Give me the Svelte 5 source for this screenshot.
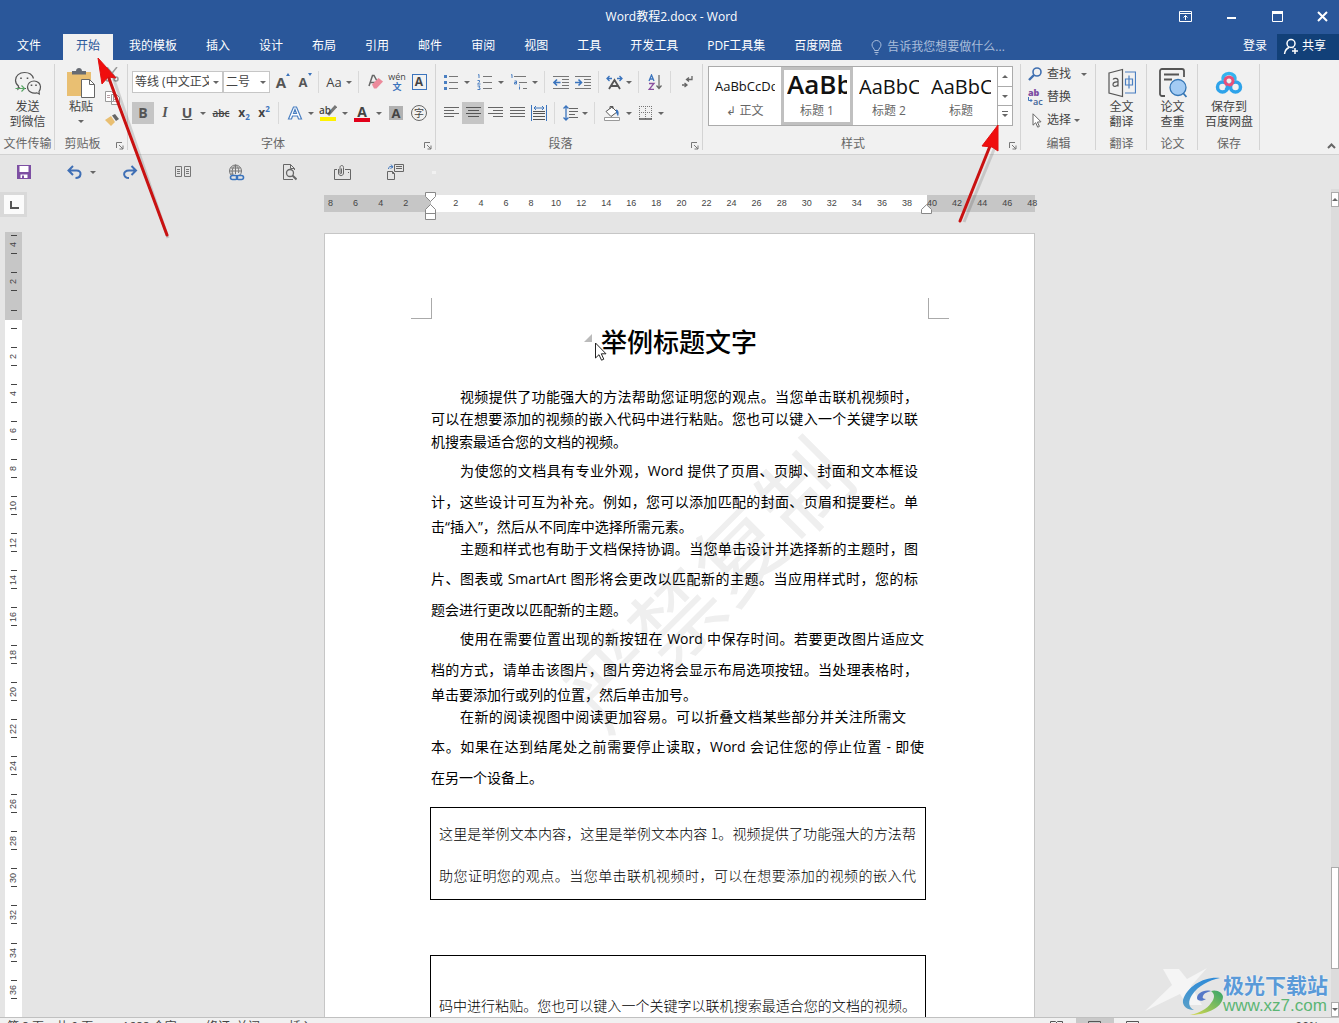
<script lang="ts">
    const tabs = [
        "我的模板", "插入", "设计", "布局", "引用", "邮件", "审阅", "视图",
        "工具", "开发工具", "PDF工具集", "百度网盘",
    ];

    const styles = [
        { sample: "AaBbCcDd", name: "↲ 正文", kind: "small" },
        { sample: "AaBb", name: "标题 1", kind: "strong" },
        { sample: "AaBbC", name: "标题 2", kind: "big" },
        { sample: "AaBbC", name: "标题", kind: "big" },
    ];

    // row: line height step, end: last line of a paragraph, start: indented first line
    const lines = [
        { text: "视频提供了功能强大的方法帮助您证明您的观点。当您单击联机视频时，", row: "r22", start: true },
        { text: "可以在想要添加的视频的嵌入代码中进行粘贴。您也可以键入一个关键字以联", row: "r22" },
        { text: "机搜索最适合您的文档的视频。", row: "r24", end: true },
        { text: "为使您的文档具有专业外观，Word 提供了页眉、页脚、封面和文本框设", row: "r34", start: true },
        { text: "计，这些设计可互为补充。例如，您可以添加匹配的封面、页眉和提要栏。单", row: "r28" },
        { text: "击“插入”，然后从不同库中选择所需元素。", row: "r22", end: true },
        { text: "主题和样式也有助于文档保持协调。当您单击设计并选择新的主题时，图", row: "r22", start: true },
        { text: "片、图表或 SmartArt 图形将会更改以匹配新的主题。当应用样式时，您的标", row: "r38" },
        { text: "题会进行更改以匹配新的主题。", row: "r24", end: true },
        { text: "使用在需要位置出现的新按钮在 Word 中保存时间。若要更改图片适应文", row: "r34", start: true, full: true },
        { text: "档的方式，请单击该图片，图片旁边将会显示布局选项按钮。当处理表格时，", row: "r28" },
        { text: "单击要添加行或列的位置，然后单击加号。", row: "r22", end: true },
        { text: "在新的阅读视图中阅读更加容易。可以折叠文档某些部分并关注所需文", row: "r22", start: true, short: true },
        { text: "本。如果在达到结尾处之前需要停止读取，Word 会记住您的停止位置 - 即使", row: "r38", full: true },
        { text: "在另一个设备上。", row: "r24", end: true },
    ];

    const hMarks = [8, 6, 4, 2, ...Array.from({ length: 25 }, (_, i) => i * 2)];
    const vMarks = [4, 2, ...Array.from({ length: 19 }, (_, i) => i * 2)];

    let activeStyle = $state(1);
    let font = $state("等线 (中文正文)");
    let size = $state("二号");
</script>

{#snippet caret()}
    <button class="caret" aria-label="更多选项"></button>
{/snippet}

{#snippet sep()}
    <span class="sep"></span>
{/snippet}

{#snippet launcher()}
    <button class="launcher" aria-label="对话框启动器">
        <svg width="8" height="8" viewBox="0 0 8 8"><path d="M.5 6V.5H6M3 3l4 4M7 3.5V7H3.5" /></svg>
    </button>
{/snippet}

<div class="app">
    <header>
        <div class="titlebar">
            <h1>Word教程2.docx - Word</h1>
            <div class="window-buttons">
                <button aria-label="功能区显示选项">
                    <svg width="13" height="11" viewBox="0 0 13 11"><path d="M.5.5h12v10H.5zM.5 2.5h12M6.5 9V4.500M4.500 6.500l2-2 2 2" /></svg>
                </button>
                <button aria-label="最小化">
                    <svg width="11" height="11" viewBox="0 0 11 11"><path d="M1 7h9" stroke-width="2" /></svg>
                </button>
                <button aria-label="最大化">
                    <svg width="11" height="11" viewBox="0 0 11 11"><path d="M.5 1h10v9.500H.5z" /><path d="M0 1.500h11" stroke-width="3" /></svg>
                </button>
                <button aria-label="关闭">
                    <svg width="11" height="11" viewBox="0 0 11 11"><path d="M1 1l9 9M10 1l-9 9" stroke-width="2" /></svg>
                </button>
            </div>
        </div>
        <nav>
            <button class="tab file">文件</button>
            <button class="tab active">开始</button>
            {#each tabs as tab}
                <button class="tab">{tab}</button>
            {/each}
            <button class="tell">
                <svg width="11" height="15" viewBox="0 0 11 15"><path d="M3.500 10.500C3.500 8.500 1 7.500 1 5a4.500 4.500 0 0 1 9 0c0 2.500-2.500 3.500-2.500 5.500zM3.500 12.500h4M4.500 14.300h2" /></svg>
                告诉我您想要做什么...
            </button>
            <button class="login">登录</button>
            <button class="share">
                <svg width="16" height="17" viewBox="0 0 16 17"><circle cx="8" cy="5.500" r="4" /><path d="M1.500 16c.5-3.500 2-5.500 4.500-6.500M9.500 9.500l1 .7M12 10v6M9 13h6" /></svg>
                共享
            </button>
        </nav>
    </header>

    <div class="ribbon">
        <section class="group wechat">
            <button class="large">
                <svg width="28" height="26" viewBox="0 0 28 26" fill="none" stroke="#555" stroke-width="1.200">
                    <path d="M6 17.500l-2 1.500.5-3C2.500 14.500 1.500 12.500 1.500 10.300 1.500 5.500 5.500 2.500 10.500 2.500c4.500 0 8 2.500 9 6M9 18.500h3" />
                    <path d="M25 21.500l.3 2.500-2.500-1.200c-4.500 1.200-9.300-1.500-9.300-5.800 0-3.700 3-6 6.600-6 3.700 0 6.400 2.600 6.400 5.700 0 2-.6 3.600-1.500 4.800z" />
                    <path d="M1.500 18.500h9M7.500 15.500l3 3-3 3" stroke="#58a565" />
                    <path d="M7 7.500v1.600M13.500 7.500v1.600M17.500 14.500V16M22 14.500V16" stroke-width="1.600" />
                </svg>
                <span>发送<br />到微信</span>
            </button>
            <footer>文件传输</footer>
        </section>

        <section class="group clipboard">
            <div class="paste-row">
                <button class="large">
                    <svg width="28" height="30" viewBox="0 0 28 30">
                        <path d="M0 4h24v24H0z" fill="#e9bf72" />
                        <path d="M5 6.500V3h4c0-4 6-4 6 0h4v3.500z" fill="#666b73" />
                        <path d="M14.500 11.500h8l5 5v13h-13z" fill="#fff" stroke="#666" />
                        <path d="M22.500 11.500v5h5" fill="none" stroke="#666" />
                    </svg>
                    <span>粘贴</span>
                    <i class="tri"></i>
                </button>
                <div class="clip-tools">
                    <button aria-label="剪切">
                        <svg width="14" height="15" viewBox="0 0 14 15" fill="none" stroke="#999" stroke-width="1.500"><path d="M2 0l8 10M12 0L4 10" /><circle cx="3" cy="12" r="2" /><circle cx="11" cy="12" r="2" /></svg>
                    </button>
                    <button aria-label="复制">
                        <svg width="15" height="14" viewBox="0 0 15 14" fill="#fff" stroke="#999"><path d="M.5.5h6l2 2v8h-8zM6.500 3.500h5l3 3v7h-8z" /><path d="M8.500 8.500h4M8.500 10.500h4M2 4.500h3M2 6.500h3" stroke="#b9a0a5" /></svg>
                    </button>
                    <button aria-label="格式刷">
                        <svg width="15" height="12" viewBox="0 0 15 12"><path d="M0 6l6-4 4 6-4 4z" fill="#e9bf72" /><path d="M7 1.500L10 0l4 5-3 2z" fill="#666" /></svg>
                    </button>
                </div>
            </div>
            <footer>剪贴板</footer>
            {@render launcher()}
        </section>

        <section class="group font">
            <div class="row">
                <label class="combo wide">
                    <select bind:value={font} aria-label="字体">
                        <option>等线 (中文正文)</option>
                    </select>
                </label>
                <label class="combo">
                    <select bind:value={size} aria-label="字号">
                        <option>二号</option>
                    </select>
                </label>
                <button class="tool glyph grow">A<i class="mark up"></i></button>
                <button class="tool glyph shrink">A<i class="mark down"></i></button>
                {@render sep()}
                <button class="tool w20 aa">Aa</button>
                {@render caret()}
                {@render sep()}
                <button class="tool" aria-label="清除格式">
                    <svg width="15" height="16" viewBox="0 0 15 16"><path d="M1 12L4.500 1.500h1.500L9 7M2 8.500h5" fill="none" stroke="#666" stroke-width="1.500" /><path d="M4 10.500L10.500 4 15 7.500 8.500 14.500H6z" fill="#ec8a9b" /></svg>
                </button>
                <button class="tool pinyin"><span>wén</span><b>文</b></button>
                <button class="tool"><span class="boxed">A</span></button>
            </div>
            <div class="row">
                <button class="tool glyph pressed">B</button>
                <button class="tool glyph italic">I</button>
                <button class="tool glyph under">U</button>
                {@render caret()}
                <button class="tool strike">abc</button>
                <button class="tool w20 script">x<sub>2</sub></button>
                <button class="tool w20 script">x<sup>2</sup></button>
                {@render sep()}
                <button class="tool effect" aria-label="文本效果">
                    <svg width="16" height="16" viewBox="0 0 16 16"><path d="M1.500 14L6.500 2h3l5 12h-3l-1-3h-5l-1 3zM6.500 8.500h3L8 4.500z" fill="#fff" stroke="#4a7fc1" stroke-width="1.200" /></svg>
                </button>
                {@render caret()}
                <button class="tool w24 highlight"><span>ab</span>
                    <svg width="17" height="16" viewBox="0 0 17 16"><path d="M8 10l8-9" stroke="#777" stroke-width="3" /><path d="M0 12h16v4H0z" fill="#fff200" /></svg>
                </button>
                {@render caret()}
                <button class="tool w24"><span class="red-a">A</span></button>
                {@render caret()}
                <button class="tool w24"><span class="shade-a">A</span></button>
                <button class="tool"><span class="circled">字</span></button>
            </div>
            <footer>字体</footer>
            {@render launcher()}
        </section>

        <section class="group paragraph">
            <div class="row">
                <button class="tool" aria-label="项目符号">
                    <svg width="14" height="16" viewBox="0 0 14 16"><path d="M5 2.500h9M5 8.500h9M5 14.500h9" stroke="#777" /><path d="M0 1h3v3H0zM0 7h3v3H0zM0 13h3v3H0z" fill="#4a7fc1" /></svg>
                </button>
                {@render caret()}
                <button class="tool w24" aria-label="编号">
                    <svg width="15" height="16" viewBox="0 0 15 16" fill="none"><path d="M6 2.500h9M6 8.500h9M6 14.500h9" stroke="#777" /><path d="M1 1l1-.5V4M.5 6.500h2v1.700L.5 10h3M.5 12h2.500L2 13.500l1 .5v1.500H.5" stroke="#4a7fc1" /></svg>
                </button>
                {@render caret()}
                <button class="tool w24" aria-label="多级列表">
                    <svg width="17" height="16" viewBox="0 0 17 16" fill="none"><path d="M4 2.500h12M9 8.500h8M13 14.500h4" stroke="#777" /><path d="M1 1l1-.5V4M4.500 7h2v3h-2V8.500h2M9.500 12.500v3M9.500 10.500v1" stroke="#4a7fc1" /></svg>
                </button>
                {@render caret()}
                {@render sep()}
                <button class="tool" aria-label="减少缩进量">
                    <svg width="16" height="13" viewBox="0 0 16 13" fill="none"><path d="M0 .5h16M9 3.500h7M9 6.500h7M9 9.500h7M0 12.500h16" stroke="#777" /><path d="M7.500 6.500h-6M4 3.500l-3 3 3 3" stroke="#3b74bd" stroke-width="1.600" /></svg>
                </button>
                <button class="tool" aria-label="增加缩进量">
                    <svg width="16" height="13" viewBox="0 0 16 13" fill="none"><path d="M0 .5h16M9 3.500h7M9 6.500h7M9 9.500h7M0 12.500h16" stroke="#777" /><path d="M0 6.500h6M3.500 3.500l3 3-3 3" stroke="#3b74bd" stroke-width="1.600" /></svg>
                </button>
                {@render sep()}
                <button class="tool w20" aria-label="中文版式">
                    <svg width="17" height="15" viewBox="0 0 17 15" fill="none"><path d="M3 14L8.500 5 14 14M5 11h7" stroke="#555" stroke-width="1.800" /><path d="M1 3.500h5M3.500 1L1 3.500 3.500 6M16 3.500h-5M13.500 1L16 3.500 13.500 6" stroke="#3b74bd" stroke-width="1.300" /></svg>
                </button>
                {@render caret()}
                {@render sep()}
                <button class="tool" aria-label="排序">
                    <svg width="15" height="16" viewBox="0 0 15 16" fill="none"><path d="M1 7l2.500-6L6 7M2 5h3" stroke="#3b74bd" stroke-width="1.300" /><path d="M1 9.500h5l-5 6h5" stroke="#8b4f9f" stroke-width="1.300" /><path d="M11 1v13M8.500 11.500L11 14.500l2.500-3" stroke="#666" stroke-width="1.200" /></svg>
                </button>
                {@render sep()}
                <button class="tool" aria-label="显示编辑标记">
                    <svg width="12" height="12" viewBox="0 0 12 12" fill="none" stroke="#666" stroke-width="1.300"><path d="M11 0v3.500H6M8 1.500L5.500 3.500 8 5.500M1 9h5M3.500 7L6 9l-2.500 2" /></svg>
                </button>
            </div>
            <div class="row">
                <button class="tool" aria-label="左对齐">
                    <svg width="15" height="12" viewBox="0 0 15 12"><path d="M0 .5h15M0 3.500h10M0 6.500h15M0 9.500h10" stroke="#666" /></svg>
                </button>
                <button class="tool pressed" aria-label="居中">
                    <svg width="15" height="12" viewBox="0 0 15 12"><path d="M0 .5h15M2 3.500h11M0 6.500h15M2 9.500h11" stroke="#555" /></svg>
                </button>
                <button class="tool" aria-label="右对齐">
                    <svg width="15" height="12" viewBox="0 0 15 12"><path d="M0 .5h15M5 3.500h10M0 6.500h15M5 9.500h10" stroke="#666" /></svg>
                </button>
                <button class="tool" aria-label="两端对齐">
                    <svg width="15" height="12" viewBox="0 0 15 12"><path d="M0 .5h15M0 3.500h15M0 6.500h15M0 9.500h15" stroke="#666" /></svg>
                </button>
                <button class="tool" aria-label="分散对齐">
                    <svg width="16" height="16" viewBox="0 0 16 16" fill="none"><path d="M2 6.500h12M2 8.500h12M2 11.500h12M2 14.500h12" stroke="#555" /><path d="M.5 0v16M15.500 0v16M3 3h10M5 1L3 3l2 2M11 1l2 2-2 2" stroke="#3b74bd" /></svg>
                </button>
                {@render sep()}
                <button class="tool w20" aria-label="行距">
                    <svg width="15" height="16" viewBox="0 0 15 16" fill="none"><path d="M6 3.500h9M6 6.500h9M6 9.500h6M6 12.500h9" stroke="#666" /><path d="M3 1v14M.5 3.500L3 1l2.500 2.500M.5 12.500L3 15l2.500-2.500" stroke="#3b74bd" stroke-width="1.300" /></svg>
                </button>
                {@render caret()}
                {@render sep()}
                <button class="tool w24" aria-label="底纹">
                    <svg width="18" height="16" viewBox="0 0 18 16"><path d="M3 6.500L9 2l5 5-6 4.500zM7 4V1.500h3V4" fill="#fff" stroke="#555" /><path d="M13 4.500c3 0 3 4 2 7l-2-4z" fill="#3b74bd" /><path d="M1.500 12.500h15v3h-15z" fill="#fff" stroke="#999" /></svg>
                </button>
                {@render caret()}
                <button class="tool" aria-label="边框">
                    <svg width="13" height="14" viewBox="0 0 13 14" fill="none"><path d="M.5 0v13M6.500 0v13M12.500 0v13M0 .5h13M0 6.500h13" stroke="#777" stroke-dasharray="1 1" /><path d="M0 13h13" stroke="#555" stroke-width="1.500" /></svg>
                </button>
                {@render caret()}
            </div>
            <footer>段落</footer>
            {@render launcher()}
        </section>

        <section class="group styles">
            <div class="gallery">
                {#each styles as style, i}
                    <button class="style {style.kind}" class:chosen={activeStyle === i} onclick={() => (activeStyle = i)}>
                        <span class="sample">{style.sample}</span>
                        <span>{style.name}</span>
                    </button>
                {/each}
                <div class="gallery-scroll">
                    <button aria-label="上一行"><i class="tri flip"></i></button>
                    <button aria-label="下一行"><i class="tri"></i></button>
                    <button aria-label="其他"><i class="tri lined"></i></button>
                </div>
            </div>
            <footer>样式</footer>
            {@render launcher()}
        </section>

        <section class="group edit">
            <button class="line">
                <svg width="16" height="14" viewBox="0 0 16 14" fill="none" stroke="#3f6fb0"><circle cx="9" cy="5" r="4" stroke-width="1.600" /><path d="M6 8l-5 5" stroke-width="2.400" /></svg>
                查找<i class="tri far"></i>
            </button>
            <button class="line">
                <span class="abac">
                    <b>ab</b>
                    <em><svg width="5" height="6" viewBox="0 0 5 6"><path d="M.5 0v3.500H4M2.500 2L4 3.500 2.500 5" fill="none" stroke="#3b74bd" /></svg>ac</em>
                </span>
                替换
            </button>
            <button class="line">
                <svg width="16" height="15" viewBox="0 0 16 15"><path d="M5 .8v11.400l2.700-2.500 2 4.500 1.700-.8-2-4.300 3.600-.3z" fill="#fff" stroke="#666" /></svg>
                选择<i class="tri"></i>
            </button>
            <footer>编辑</footer>
        </section>

        <section class="group narrow">
            <button class="large">
                <svg width="28" height="29" viewBox="0 0 28 29" fill="none" stroke="#555" stroke-width="1.200">
                    <path d="M1 4.500L14.500 1v27L1 24.500z" />
                    <path d="M5 11c1-1.500 5-2 5 1v6M10 13.500c-3-.3-5 .5-5 2.500 0 3 4 2 5 0" />
                    <path d="M17 3.500h10.500v21H17M17.500 10.500h7v6h-7zM21 7v13" stroke="#4a7fc1" />
                </svg>
                <span>全文<br />翻译</span>
            </button>
            <footer>翻译</footer>
        </section>

        <section class="group narrow">
            <button class="large">
                <svg width="28" height="30" viewBox="0 0 28 30" fill="none" stroke="#555" stroke-width="1.800">
                    <path d="M6 28H3a2 2 0 0 1-2-2V3a2 2 0 0 1 2-2h20a2 2 0 0 1 2 2v6M5 6.500h15M5 11.500h8" />
                    <circle cx="19" cy="19.500" r="8" fill="#a3cbf3" stroke="#3576b5" stroke-width="1.300" />
                    <path d="M24 25l3.500 4" stroke="#3576b5" />
                </svg>
                <span>论文<br />查重</span>
            </button>
            <footer>论文</footer>
        </section>

        <section class="group save">
            <button class="large">
                <svg width="28" height="24" viewBox="0 0 28 24" fill="none" stroke-width="3.500">
                    <circle cx="7.500" cy="16" r="5" stroke="#2ea3ea" />
                    <circle cx="20.500" cy="16" r="5" stroke="#2ea3ea" />
                    <path d="M8.500 9.500C7 5.500 10 2.500 14 2.500s7 3 5.500 7" stroke="#35b3ee" />
                    <circle cx="14" cy="10" r="4" stroke="#ea4f78" stroke-width="3" />
                    <path d="M11 19l3-3.500" stroke="#2ea3ea" />
                </svg>
                <span>保存到<br />百度网盘</span>
            </button>
            <footer>保存</footer>
        </section>

        <button class="collapse" aria-label="折叠功能区">
            <svg width="9" height="6" viewBox="0 0 9 6"><path d="M1 5l3.500-3.500L8 5" fill="none" stroke="#666" stroke-width="2" /></svg>
        </button>
    </div>

    <div class="quick">
        <button aria-label="保存">
            <svg width="14" height="14" viewBox="0 0 14 14"><path d="M0 0h14v14H0z" fill="#7d4fa3" /><path d="M2.500 1h9v6h-9zM3.500 9.500h7V13h-7z" fill="#fff" /><path d="M5 10.500h2V13H5z" fill="#7d4fa3" /></svg>
        </button>
        <button class="undo" aria-label="撤消">
            <svg width="16" height="14" viewBox="0 0 16 14" fill="none" stroke="#3f6fb5" stroke-width="2"><path d="M1.500 5.500h8c6 0 5 7.500-1 7.500M6 1L1.500 5.500 6 10" /></svg>
            <i class="tri"></i>
        </button>
        <button aria-label="恢复">
            <svg width="16" height="14" viewBox="0 0 16 14" fill="none" stroke="#3f6fb5" stroke-width="2"><path d="M14 5.500H7C0 5.500 1 13 7 13M9.500 1L14 5.500 9.500 10" /></svg>
        </button>
        <button aria-label="双页">
            <svg width="16" height="12" viewBox="0 0 16 12" fill="none" stroke="#777"><path d="M.5.5h6v10h-6zM9.500.5h6v10h-6zM2 3.500h3M2 5.500h3M2 7.500h3M11 3.500h3M11 5.500h3M11 7.500h3" /></svg>
        </button>
        <button aria-label="超链接">
            <svg width="17" height="17" viewBox="0 0 17 17" fill="none"><circle cx="7.500" cy="7" r="6" stroke="#777" /><path d="M7.500 1v9M1.500 7h12M2.500 4h10M2.500 10h3M7.500 1c-4 3-4 8-2 11M7.500 1c3 2 3.500 5 3 8" stroke="#777" /><path d="M3 11h11v5H3z" fill="#e5e5e5" /><rect x="2.500" y="11.500" width="7" height="4" rx="2" stroke="#3b74bd" stroke-width="1.600" /><rect x="8.500" y="11.500" width="7" height="4" rx="2" stroke="#3b74bd" stroke-width="1.600" /></svg>
        </button>
        <button aria-label="打印预览">
            <svg width="15" height="17" viewBox="0 0 15 17" fill="none" stroke="#666"><path d="M11 15.500H1.500V.5h7l4 4V6M8.500.5v4h4" /><circle cx="8" cy="9" r="3.500" stroke-width="1.300" /><path d="M10.500 11.500l4 4" stroke-width="2" /></svg>
        </button>
        <button aria-label="附件">
            <svg width="17" height="15" viewBox="0 0 17 15" fill="none" stroke="#666"><path d="M3 4.500H.5v10h16v-10H11M14 7.500h1" /><path d="M4.500 4v4c0 3.500 5 3.500 5 0V2.500c0-2.700-3.500-2.700-3.500 0V8c0 1 1.500 1 1.500 0V3.500" /></svg>
        </button>
        <button aria-label="插入对象">
            <svg width="17" height="16" viewBox="0 0 17 16" fill="none" stroke="#666"><path d="M7.500.5h9v7h-9zM9 2.500h6M9 4.500h6M.5 7.500h5l2 2v6h-7zM5.500 7.500v2h2" /><path d="M1.500 5c0-2.500 2-3 4-2M4 .5l2 2.500-2.500 1.500" stroke="#3b74bd" /></svg>
        </button>
        <span class="dot"></span>
    </div>

    <main>
        <div class="left">
            <button class="tab-stop" aria-label="制表符"><svg width="9" height="8" viewBox="0 0 9 8"><path d="M1 0v7h8" fill="none" stroke="#555" stroke-width="2" /></svg></button>
            <div class="v-ruler">
                <div class="v-marks">
                    {#each vMarks as mark}
                        <div><i></i><span>{mark || ""}</span><i></i></div>
                    {/each}
                </div>
            </div>
        </div>

        <div class="canvas">
            <div class="h-ruler">
                <div class="h-marks">
                    {#each hMarks as mark}
                        <span>{mark || ""}</span>
                    {/each}
                </div>
                <svg class="indent first" width="11" height="28" viewBox="0 0 11 28"><path d="M.5.5h10v4L5.500 9.500.5 4.500zM.5 27.500h10v-10L5.500 12.500.5 17.500zM.5 21.500h10" fill="#fff" stroke="#888" /></svg>
                <svg class="indent last" width="11" height="10" viewBox="0 0 11 10"><path d="M.5 9.500h10V5.500L5.500.7.5 5.500z" fill="#fff" stroke="#888" /></svg>
            </div>

            <article>
                <i class="corner tl"></i>
                <i class="corner tr"></i>
                <div class="watermark">严禁复制</div>
                <h2>举例标题文字</h2>
                <svg class="fold" width="8" height="8" viewBox="0 0 8 8"><path d="M8 0v8H0z" fill="#bbb" /></svg>
                <svg class="pointer" width="12" height="19" viewBox="0 0 12 19"><path d="M.5 1v15l3.500-3.300 2.500 5.500 2.300-1-2.500-5.400h4.700z" fill="#fff" stroke="#222" /></svg>
                <div class="body">
                    {#each lines as line}
                        <p class={line.row} class:start={line.start} class:end={line.end} class:full={line.full} class:short={line.short}>{line.text}</p>
                    {/each}
                </div>
                <div class="box">
                    <p>这里是举例文本内容，这里是举例文本内容 1。视频提供了功能强大的方法帮</p>
                    <p>助您证明您的观点。当您单击联机视频时，可以在想要添加的视频的嵌入代</p>
                </div>
                <div class="box second">
                    <p>码中进行粘贴。您也可以键入一个关键字以联机搜索最适合您的文档的视频。</p>
                </div>
            </article>
        </div>

        <div class="scrollbar">
            <button aria-label="向上滚动"><i class="tri flip"></i></button>
            <div class="thumb"></div>
            <button aria-label="向下滚动"><i class="tri"></i></button>
        </div>
    </main>

    <div class="status">
        <span>第 8 页，共 9 页</span>
        <span>1688 个字</span>
        <span>修订: 关闭</span>
        <span>插入</span>
        <div class="views">
            <button aria-label="阅读视图"><svg width="13" height="10" viewBox="0 0 13 10"><path d="M.5.5h5l1 1 1-1h5v9H.5zM6.500 1v9" /></svg></button>
            <button class="on" aria-label="页面视图"><svg width="13" height="10" viewBox="0 0 13 10"><path d="M.5.500h12v9H.5z" /></svg></button>
            <button aria-label="Web 版式"><svg width="13" height="10" viewBox="0 0 13 10"><path d="M.5.5h12v9H.5z" /></svg></button>
        </div>
        <span class="zoom">90%</span>
    </div>

    <svg class="arrow one" width="84" height="190" viewBox="0 0 84 190">
        <path d="M14 20l56 164" stroke="#0002" stroke-width="3" transform="translate(3 1)" />
        <path d="M12 20l60 162" stroke="#c91212" stroke-width="3" stroke-linecap="round" />
        <path d="M3 5l18 20-8-1-6 7z" fill="#f00e0e" stroke="#e01010" />
    </svg>
    <svg class="arrow two" width="50" height="106" viewBox="0 0 50 106">
        <path d="M36 25L5 100" stroke="#0002" stroke-width="3" transform="translate(3 1)" />
        <path d="M36 20L4 100" stroke="#c91212" stroke-width="3" stroke-linecap="round" />
        <path d="M42 4v26l-6-4-10-1z" fill="#f00e0e" stroke="#e01010" />
    </svg>

    <div class="brand">
        <svg width="78" height="52" viewBox="0 0 78 52">
            <defs>
                <linearGradient id="swirl" x1="0" y1="0" x2="0" y2="1">
                    <stop offset="0" stop-color="#2e8bd8" />
                    <stop offset="1" stop-color="#5aa0c8" />
                </linearGradient>
                <linearGradient id="leaf" x1="1" y1="0" x2="0" y2="1">
                    <stop offset="0" stop-color="#35a56a" />
                    <stop offset="1" stop-color="#d9d94e" />
                </linearGradient>
            </defs>
            <path d="M18 3h16l8 10L62 2l-16 18 11 19H42l-7-11L0 45l27-26z" fill="#fff" opacity=".6" />
            <path d="M75 12C60 10 42 20 38 34c-1 6 4 10 11 10-6-3-6-9-2-15 6-9 17-15 28-17z" fill="url(#swirl)" />
            <path d="M45 49c14 0 32-6 33-18 0-4-6-8-12-6 4 3 4 7 0 12-4 6-12 10-21 12z" fill="url(#leaf)" />
            <path d="M66 25c-8-2-14 3-14 7 0 3 5 4 9 1-3 0-4-1-3-3 1-3 5-4 8-5z" fill="#5578c8" />
        </svg>
        <div class="brand-text">
            <strong>极光下载站</strong>
            <a href="#xz7">www.xz7.com</a>
        </div>
    </div>
</div>

<style>
    :global(body) {
        margin: 0;
    }

    .app {
        position: relative;
        display: flex;
        flex-direction: column;
        height: 100vh;
        overflow: hidden;
        background: #e5e5e5;
        color: #444;
        font: 12px/16px "Open Sans", "Noto Sans CJK SC", sans-serif;
    }

    button {
        padding: 0;
        border: 0;
        background: none;
        color: inherit;
        font: inherit;
    }

    svg {
        display: block;
        flex: none;
    }

    p, h1, h2 {
        margin: 0;
        font-weight: normal;
    }

    header {
        flex: none;
        background: #2a579a;
        color: #fff;
    }

    .titlebar {
        position: relative;
        height: 34px;
    }

    h1 {
        padding-left: 4px;
        font-size: 12px;
        line-height: 34px;
        text-align: center;
    }

    .window-buttons {
        position: absolute;
        top: 0;
        right: 0;
        display: flex;
        height: 32px;
    }

    .window-buttons button {
        display: grid;
        place-items: center;
        width: 46px;
    }

    .window-buttons button:last-child {
        width: 39px;
        padding-left: 17px;
        place-items: center start;
    }

    header svg {
        fill: none;
        stroke: #fff;
    }

    nav {
        display: flex;
        gap: 3px;
        height: 26px;
        padding-left: 4px;
    }

    .tab {
        padding: 0 13px 2px;
        white-space: nowrap;
    }

    .tab.file {
        margin-right: 6px;
    }

    .tab.active {
        background: #f1f1f1;
        color: #2a579a;
    }

    .tell {
        display: flex;
        align-items: center;
        gap: 5px;
        margin-left: 13px;
        color: #a9bddb;
        white-space: nowrap;
    }

    .tell svg {
        stroke: #a9bddb;
    }

    .login {
        margin-left: auto;
        padding: 0 7px 2px;
    }

    .share {
        display: flex;
        align-items: center;
        gap: 3px;
        width: 62px;
        padding: 0 0 2px 6px;
        background: #124078;
        white-space: nowrap;
    }

    .share svg {
        stroke-width: 1.5px;
    }

    .ribbon {
        position: relative;
        display: flex;
        flex: none;
        height: 94px;
        border-bottom: 1px solid #d2d2d2;
        background: #f1f1f1;
    }

    .group {
        position: relative;
        display: flex;
        flex-direction: column;
        flex: none;
        gap: 9px;
        box-sizing: border-box;
        height: 91px;
        padding-top: 11px;
    }

    .group::after {
        content: "";
        position: absolute;
        top: 4px;
        right: 0;
        bottom: 1px;
        width: 1px;
        background: #d4d4d4;
    }

    footer {
        position: absolute;
        right: 0;
        bottom: -1px;
        left: 0;
        color: #666;
        text-align: center;
        white-space: nowrap;
    }

    .wechat { width: 55px; }
    .clipboard { width: 73px; }
    .font { width: 308px; padding-left: 4px; }
    .paragraph { width: 267px; padding-left: 4px; }
    .styles { width: 318px; padding: 6px 0 0 5px; }
    .edit { width: 75px; padding: 4px 0 0 7px; gap: 3px; }
    .narrow { width: 51px; }
    .save { width: 62px; }

    .wechat, .clipboard, .narrow, .save {
        padding-top: 7px;
    }

    .font footer, .clipboard footer, .paragraph footer, .styles footer {
        right: 18px;
    }

    .large {
        display: flex;
        flex-direction: column;
        align-items: center;
        line-height: 15px;
        white-space: nowrap;
    }

    .large svg {
        height: 32px;
    }

    .paste-row {
        display: flex;
        padding-left: 12px;
        gap: 10px;
    }

    .paste-row .large .tri {
        margin-top: 6px;
    }

    .clip-tools {
        display: flex;
        flex-direction: column;
        gap: 9px;
    }

    .launcher {
        position: absolute;
        right: 4px;
        bottom: 1px;
    }

    .launcher svg {
        fill: none;
        stroke: #777;
    }

    .row {
        display: flex;
        align-items: center;
        height: 22px;
    }

    .tool {
        position: relative;
        display: grid;
        place-items: center;
        flex: none;
        width: 22px;
        height: 22px;
    }

    .tool.w20 { width: 20px; }
    .tool.w24 { width: 24px; }

    .pressed {
        background: #c5c5c5;
    }

    .sep {
        flex: none;
        width: 1px;
        height: 22px;
        margin: 0 5px 0 4px;
        background: #d9d9d9;
    }

    .caret {
        flex: none;
        width: 10px;
        height: 22px;
    }

    .caret::before, .tri {
        content: "";
        display: block;
        width: 0;
        margin: 0 auto;
        border: 3px solid transparent;
        border-top-color: #666;
        border-bottom: 0;
    }

    .tri {
        flex: none;
        margin: 0;
    }

    .tri.flip {
        border-top: 0;
        border-bottom: 3px solid #666;
    }

    .tri.lined {
        position: relative;
    }

    .tri.lined::before {
        content: "";
        position: absolute;
        top: -6px;
        left: -3px;
        width: 6px;
        height: 1px;
        background: #666;
    }

    .combo {
        position: relative;
        width: 47px;
        height: 22px;
    }

    .combo.wide {
        width: 91px;
    }

    .combo::after {
        content: "";
        position: absolute;
        top: 10px;
        right: 4px;
        border: 3px solid transparent;
        border-top-color: #666;
        border-bottom: 0;
        pointer-events: none;
    }

    select {
        appearance: none;
        box-sizing: border-box;
        width: 100%;
        height: 22px;
        padding: 0 13px 0 2px;
        border: 1px solid #c6c6c6;
        border-radius: 0;
        background: #fff;
        color: #444;
        font: inherit;
        text-overflow: clip;
    }

    .glyph {
        color: #555;
        font-size: 14px;
        font-weight: bold;
    }

    .grow {
        font-size: 15px;
    }

    .shrink {
        font-size: 13px;
    }

    .mark {
        position: absolute;
        top: 2px;
        right: 2px;
        border: 2px solid transparent;
    }

    .mark.up {
        border-top: 0;
        border-bottom: 3px solid #3b74bd;
    }

    .mark.down {
        border-top: 3px solid #3b74bd;
        border-bottom: 0;
    }

    .aa {
        font-size: 13px;
    }

    .pinyin {
        align-content: center;
        line-height: 10px;
    }

    .pinyin span {
        font-size: 9px;
    }

    .pinyin b {
        color: #3b74bd;
        font-size: 9px;
    }

    .boxed {
        width: 13px;
        border: 1px solid #3b74bd;
        font-weight: bold;
        line-height: 14px;
    }

    .italic {
        font-family: "Liberation Serif", serif;
        font-style: italic;
    }

    .under {
        text-decoration: underline;
    }

    .strike {
        width: 26px;
        font-size: 10px;
        font-weight: 600;
        text-decoration: line-through;
    }

    .script {
        display: block;
        font-weight: bold;
    }

    .script sub, .script sup {
        color: #3b74bd;
        font-size: 8px;
        line-height: 0;
    }

    .highlight span {
        position: absolute;
        top: 2px;
        left: 3px;
        font-size: 10px;
        font-weight: 600;
        line-height: 12px;
    }

    .red-a {
        width: 16px;
        border-bottom: 4px solid #e2001a;
        font-size: 14px;
        font-weight: bold;
        line-height: 13px;
    }

    .shade-a {
        width: 14px;
        background: #b1b1b1;
        font-size: 13px;
        font-weight: bold;
        line-height: 14px;
    }

    .circled {
        width: 14px;
        border: 1px solid #666;
        border-radius: 50%;
        font-size: 10px;
        line-height: 14px;
    }

    .gallery {
        display: flex;
        box-sizing: border-box;
        width: 305px;
        height: 60px;
        border: 1px solid #ababab;
        background: #fff;
    }

    .style {
        display: flex;
        flex-direction: column;
        align-items: center;
        flex: none;
        box-sizing: border-box;
        width: 72px;
        padding: 0 3px;
        border: 3px solid transparent;
        color: #666;
        overflow: hidden;
    }

    .style.chosen {
        padding: 0 2px;
        border-color: #c0c0c0;
    }

    .sample {
        width: 60px;
        height: 33px;
        overflow: hidden;
        color: #111;
        font-size: 20px;
        line-height: 33px;
        text-align: left;
    }

    .small .sample {
        font-size: 13px;
    }

    .strong .sample {
        font-size: 26px;
        font-weight: 600;
        line-height: 28px;
    }

    .gallery-scroll {
        display: flex;
        flex-direction: column;
        flex: 1;
        border-left: 1px solid #ababab;
    }

    .gallery-scroll button {
        display: grid;
        place-items: center;
        flex: 1;
        border-bottom: 1px solid #ababab;
    }

    .gallery-scroll button:last-child {
        border-bottom: 0;
    }

    .line {
        display: flex;
        align-items: center;
        gap: 3px;
        height: 20px;
        text-align: left;
    }

    .tri.far {
        margin-left: 7px;
    }

    .abac {
        display: flex;
        flex-direction: column;
        width: 16px;
        font-size: 9px;
        font-weight: 600;
        line-height: 9px;
    }

    .abac b {
        color: #7d4fa3;
    }

    .abac em {
        display: flex;
        color: #3b5f96;
        font-style: normal;
    }

    .collapse {
        position: absolute;
        right: 3px;
        bottom: 5px;
    }

    .quick {
        display: flex;
        align-items: center;
        gap: 21px;
        flex: none;
        height: 34px;
        padding-left: 8px;
    }

    .quick button {
        display: flex;
        align-items: center;
        justify-content: center;
        width: 32px;
        height: 22px;
    }

    .quick .undo {
        justify-content: flex-start;
        gap: 7px;
        padding-left: 6px;
    }

    .dot {
        width: 4px;
        height: 3px;
        background: #f1f1f1;
    }

    main {
        display: grid;
        grid-template-columns: 28px 1fr 8px;
        flex: 1;
        min-height: 0;
        overflow: hidden;
    }

    .left {
        display: flex;
        flex-direction: column;
        min-height: 0;
        padding-top: 3px;
        overflow: hidden;
    }

    .tab-stop {
        display: grid;
        place-items: center;
        flex: none;
        box-sizing: border-box;
        width: 27px;
        height: 25px;
        border: 3px solid #d9d9d9;
        border-left-width: 4px;
        background: #fbfbfb;
    }

    .v-ruler {
        flex: 1;
        min-height: 0;
        width: 17px;
        margin: 15px 0 0 5px;
        overflow: hidden;
        background: linear-gradient(#c6c6c6 88px, #fff 88px);
    }

    .v-marks {
        display: flex;
        flex-direction: column;
        height: 782px;
        margin-top: -6px;
    }

    .v-marks div {
        display: flex;
        flex-direction: column;
        align-items: center;
        justify-content: center;
        flex: 1;
    }

    .v-marks i {
        flex: none;
        width: 6px;
        height: 1px;
        background: #444;
    }

    .v-marks span {
        height: 17px;
        font: 9px/17px "Liberation Sans", sans-serif;
        writing-mode: vertical-rl;
        transform: rotate(180deg);
        text-align: center;
    }

    .canvas {
        display: flex;
        flex-direction: column;
        align-items: center;
        min-width: 0;
        min-height: 0;
        overflow: hidden;
    }

    .h-ruler {
        position: relative;
        flex: none;
        width: 711px;
        height: 17px;
        margin-top: 6px;
        background: linear-gradient(90deg, #c6c6c6 107px, #fff 107px, #fff 603px, #c6c6c6 603px);
    }

    .h-marks {
        display: flex;
        margin: 0 -10px 0 -6px;
        font: 9px/17px "Liberation Sans", sans-serif;
    }

    .h-marks span {
        flex: 1;
        text-align: center;
    }

    .indent {
        position: absolute;
        top: -3px;
        left: 101px;
    }

    .indent.last {
        top: 9px;
        left: 597px;
    }

    article {
        position: relative;
        flex: none;
        box-sizing: border-box;
        width: 711px;
        min-height: 1005px;
        margin-top: 21px;
        padding: 89px 107px 0 106px;
        border: 1px solid #c6c6c6;
        background: #fff;
        color: #000;
        font-family: "Noto Sans CJK SC", sans-serif;
    }

    .corner {
        position: absolute;
        top: 64px;
        left: 86px;
        width: 20px;
        height: 20px;
        border: solid #aaa;
        border-width: 0 1px 1px 0;
    }

    .corner.tr {
        left: 603px;
        border-width: 0 0 1px 1px;
    }

    .watermark {
        position: absolute;
        top: 287px;
        left: 200px;
        color: #efefef;
        font-size: 90px;
        line-height: 120px;
        white-space: nowrap;
        transform: rotate(-45deg);
    }

    h2 {
        position: relative;
        font-size: 26px;
        font-weight: 500;
        line-height: 36px;
        text-align: center;
    }

    .fold {
        position: absolute;
        top: 100px;
        left: 259px;
    }

    .pointer {
        position: absolute;
        top: 108px;
        left: 270px;
    }

    .body {
        position: relative;
        padding-top: 27px;
        font-family: "Open Sans", "Noto Sans CJK SC", sans-serif;
    }

    .body p {
        margin-right: 9px;
        font-size: 14px;
        text-align-last: justify;
        white-space: nowrap;
    }

    .body p.start {
        padding-left: 29px;
    }

    .body p.full {
        margin-right: 3px;
    }

    .body p.short {
        margin-right: 21px;
    }

    .body p.end {
        text-align-last: left;
    }

    .r22 { line-height: 22px; }
    .r24 { line-height: 24px; }
    .r28 { line-height: 28px; }
    .r34 { line-height: 34px; }
    .r38 { line-height: 38px; }

    .box {
        position: relative;
        height: 87px;
        margin: 17px 1px 0 -1px;
        padding: 4px 9px 0 8px;
        border: 1px solid #000;
    }

    .box p {
        font-size: 14px;
        font-weight: 300;
        line-height: 42px;
        text-align-last: justify;
        white-space: nowrap;
    }

    .box.second {
        margin-top: 55px;
        padding-top: 28px;
    }

    .scrollbar {
        display: flex;
        flex-direction: column;
        padding-top: 3px;
        background: #dcdcdc;
        overflow: hidden;
    }

    .scrollbar button {
        display: grid;
        place-items: center;
        flex: none;
        height: 15px;
        border: 1px solid #ababab;
        background: #fff;
    }

    .thumb {
        height: 100px;
        margin: auto 0 33px;
        border: 1px solid #ababab;
        background: #fff;
    }

    .status {
        display: flex;
        gap: 29px;
        flex: none;
        box-sizing: border-box;
        height: 6px;
        padding-left: 7px;
        border-top: 1px solid #c0c0c0;
        background: #f1f1f1;
        line-height: 18px;
        overflow: hidden;
        white-space: nowrap;
    }

    .views {
        display: flex;
        margin-left: auto;
    }

    .views button {
        width: 38px;
        height: 16px;
        padding: 0 12px;
    }

    .views .on {
        background: #c9c9c9;
    }

    .views svg {
        fill: none;
        stroke: #555;
    }

    .zoom {
        margin: 0 20px 0 114px;
    }

    .arrow {
        position: absolute;
        top: 53px;
        left: 95px;
        fill: none;
        pointer-events: none;
    }

    .arrow.two {
        top: 121px;
        left: 956px;
    }

    .brand {
        position: absolute;
        right: 11px;
        bottom: 5px;
        display: flex;
    }

    .brand-text {
        display: flex;
        flex-direction: column;
        padding-top: 6px;
        white-space: nowrap;
    }

    .brand strong {
        color: #5a9ad8;
        font-size: 21px;
        line-height: 26px;
        text-shadow: 0 0 2px #fff;
    }

    .brand a {
        color: #5cb574;
        font: 17px/16px "Liberation Sans", sans-serif;
        text-decoration: none;
    }
</style>
